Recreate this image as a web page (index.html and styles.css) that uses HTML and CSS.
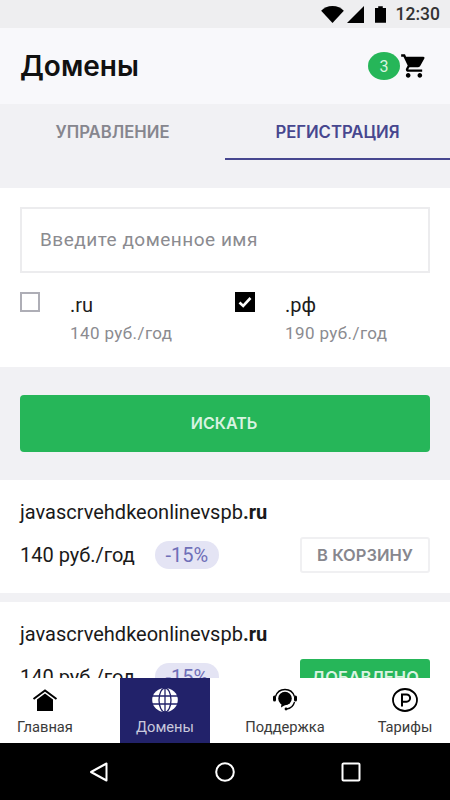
FILE: index.html
```html
<!DOCTYPE html>
<html lang="ru">
<head>
<meta charset="utf-8">
<title>Домены</title>
<link rel="stylesheet" href="styles.css">
</head>
<body>
<div class="app">
  <div class="status">
    <svg class="st-wifi" viewBox="0 0 24 18" width="23" height="17"><path d="M0 5C3 2 7 0 12 0s9 2 12 5L12 18z" fill="#000"/></svg>
    <svg class="st-signal" viewBox="0 0 18 18" width="17" height="17"><path d="M0 18L18 0v18z" fill="#000"/></svg>
    <svg class="st-batt" viewBox="0 0 12 18" width="11" height="17"><path d="M3.500 0h5v2H12v16H0V2h3.500z" fill="#000"/></svg>
    <span class="st-time">12:30</span>
  </div>
  <header class="head">
    <h1 class="title">Домены</h1>
    <div class="cart">
      <span class="badge">3</span>
      <svg class="cart-icon" viewBox="0 0 24 24" width="28" height="28"><path d="M7 18c-1.100 0-1.990.9-1.990 2S5.900 22 7 22s2-.9 2-2-.9-2-2-2zM1 2v2h2l3.600 7.590-1.350 2.450c-.16.28-.25.61-.25.96 0 1.100.9 2 2 2h12v-2H7.420c-.14 0-.25-.11-.25-.25l.03-.12.9-1.630h7.450c.75 0 1.410-.41 1.750-1.030l3.580-6.490A1 1 0 0 0 20 4H5.210l-.94-2H1zm16 16c-1.100 0-1.990.9-1.990 2s.89 2 1.990 2 2-.9 2-2-.9-2-2-2z" fill="#000"/></svg>
    </div>
  </header>
  <nav class="tabs">
    <div class="tab">УПРАВЛЕНИЕ</div>
    <div class="tab tab-active">РЕГИСТРАЦИЯ</div>
  </nav>
  <main class="main">
    <section class="search">
      <div class="field">Введите доменное имя</div>
      <div class="zones">
        <div class="zone">
          <span class="check"></span>
          <div class="zone-text">
            <div class="zone-name">.ru</div>
            <div class="zone-price">140 руб./год</div>
          </div>
        </div>
        <div class="zone">
          <span class="check check-on"><svg viewBox="0 0 20 20" width="20" height="20"><path d="M4.500 10.500l3.700 3.500 7.300-8" fill="none" stroke="#fff" stroke-width="2.600"/></svg></span>
          <div class="zone-text">
            <div class="zone-name">.рф</div>
            <div class="zone-price">190 руб./год</div>
          </div>
        </div>
      </div>
    </section>
    <div class="action"><div class="search-btn">ИСКАТЬ</div></div>
    <article class="card">
      <div class="domain">javascrvehdkeonlinevspb<b>.ru</b></div>
      <div class="row">
        <span class="price">140 руб./год</span>
        <span class="off">-15%</span>
        <span class="buy">В КОРЗИНУ</span>
      </div>
    </article>
    <article class="card">
      <div class="domain">javascrvehdkeonlinevspb<b>.ru</b></div>
      <div class="row">
        <span class="price">140 руб./год</span>
        <span class="off">-15%</span>
        <span class="buy buy-added">ДОБАВЛЕНО</span>
      </div>
    </article>
  </main>
  <footer class="bottom">
    <div class="item item-home">
      <svg viewBox="0 0 26 24" width="26" height="24"><path d="M1.500 11L13 2.500 24.500 11" fill="none" stroke="#000" stroke-width="2"/><path d="M5 11.500L13 5.500l8 6V23H5z" fill="#000"/></svg>
      <span>Главная</span>
    </div>
    <div class="item item-active">
      <svg viewBox="0 0 26 24" width="26" height="24"><ellipse cx="13" cy="12" rx="12.800" ry="12" fill="#fff"/><g fill="none" stroke="#22226a" stroke-width="1.300"><path d="M0 8h26M0 16h26M13 0v24"/><ellipse cx="13" cy="12" rx="6" ry="12"/></g></svg>
      <span>Домены</span>
    </div>
    <div class="item item-support">
      <svg viewBox="0 0 26 24" width="26" height="24"><circle cx="13" cy="10.500" r="6.800" fill="#000"/><path d="M9.500 15.500l-.5 4 5-3z" fill="#000"/><path d="M3.500 8.500C5 4 8.500 1.500 13 1.500s8 2.500 9.500 7M22.500 14c-1 4-4 6.500-8 7" fill="none" stroke="#000" stroke-width="1.300"/><rect x="1" y="7.500" width="3" height="6" rx="1.500" fill="#000"/><rect x="22" y="7.500" width="3" height="6" rx="1.500" fill="#000"/><circle cx="14" cy="21" r="1.400" fill="#000"/></svg>
      <span>Поддержка</span>
    </div>
    <div class="item item-tariff">
      <svg viewBox="0 0 26 24" width="26" height="24"><ellipse cx="13" cy="12" rx="12" ry="11" fill="none" stroke="#000" stroke-width="1.800"/><path d="M10 18.500V6.500h4.500a3.600 3.600 0 0 1 0 7.200H10" fill="none" stroke="#000" stroke-width="2"/></svg>
      <span>Тарифы</span>
    </div>
  </footer>
  <div class="sysnav">
    <svg viewBox="0 0 22 22" width="22" height="22"><path d="M18.500 2.500v17L3 11z" fill="none" stroke="#fff" stroke-width="2" stroke-linejoin="round"/></svg>
    <svg viewBox="0 0 22 22" width="22" height="22"><circle cx="11" cy="11" r="8.800" fill="none" stroke="#fff" stroke-width="2"/></svg>
    <svg viewBox="0 0 22 22" width="22" height="22"><rect x="2.500" y="2.500" width="17" height="17" rx="1" fill="none" stroke="#fff" stroke-width="2"/></svg>
  </div>
</div>
</body>
</html>
```

FILE: styles.css
```css
* { box-sizing: border-box; }
html, body { margin: 0; padding: 0; }
body { font-family: Roboto, "Noto Sans", sans-serif; background: #f1f1f4; color: #111; }
.app { width: 450px; height: 800px; display: flex; flex-direction: column; overflow: hidden; }

.status { flex: 0 0 28px; background: #eeeef0; display: flex; align-items: center; justify-content: flex-end; padding-right: 10px; }
.st-wifi { margin-right: 3px; }
.st-signal { margin-right: 11px; }
.st-batt { margin-right: 10px; }
.st-time { font-size: 17.500px; font-weight: 500; color: #333; }

.head { flex: 0 0 76px; background: #f8f8fb; display: flex; align-items: center; justify-content: space-between; padding: 0 20px; }
.title { margin: 0; font-family: Inter, Roboto, sans-serif; font-size: 28px; font-weight: 600; color: #111; }
.cart { display: flex; align-items: center; margin-right: 2px; }
.badge { width: 32px; height: 28px; border-radius: 50%; background: #26b659; color: #d8f5e0; font-size: 16px; display: flex; align-items: center; justify-content: center; }
.cart-icon { margin-left: 0; }

.tabs { flex: 0 0 56px; background: #f1f1f4; display: flex; }
.tab { flex: 1; display: flex; align-items: center; justify-content: center; padding-top: 1px; font-family: Inter, Roboto, sans-serif; font-size: 16.700px; font-weight: 600; color: #86868e; border-bottom: 2px solid transparent; }
.tab-active { color: #47478f; border-bottom-color: #47478f; }

.main { flex: 1; min-height: 0; overflow: hidden; padding-top: 28px; background: #f1f1f4; }
.search { height: 179px; background: #fff; padding: 19px 20px 0; }
.field { height: 66px; border: 2px solid #ececee; display: flex; align-items: center; padding: 0 0 2px 18px; font-size: 19px; color: #8b8b90; letter-spacing: .5px; }
.zones { display: flex; margin-top: 19px; }
.zone { flex: 0 0 215px; display: flex; }
.check { flex: 0 0 20px; width: 20px; height: 20px; border: 2px solid #aeaeb6; display: block; }
.check-on { background: #000; border: 0; }
.check-on svg { display: block; }
.zone-text { margin-left: 30px; padding-top: 1px; }
.zone-name { font-size: 20px; line-height: 24px; color: #1c1c1c; }
.zone-price { margin-top: 6px; font-size: 17px; line-height: 20px; color: #8b8b90; letter-spacing: .4px; }

.action { height: 113px; padding-top: 28px; }
.search-btn { height: 57px; background: #26b659; border-radius: 4px; color: #d9f3e1; font-size: 16px; font-weight: 600; font-family: Inter, Roboto, sans-serif; display: flex; align-items: center; justify-content: center; margin: 0 20px; padding: 0 2px 2px 0; }

.card { height: 113px; background: #fff; margin-bottom: 9px; padding: 20px 20px 0; }
.domain { font-size: 20px; line-height: 24px; color: #1a1a1a; }
.domain b { font-weight: 700; }
.row { display: flex; align-items: center; margin-top: 13px; height: 36px; }
.price { font-size: 20px; color: #1a1a1a; }
.off { margin-left: 20px; width: 64px; height: 28px; border-radius: 14px; background: #e4e4f4; color: #6f6fb8; font-size: 20px; display: flex; align-items: center; justify-content: center; }
.buy { margin-left: auto; width: 130px; height: 36px; border: 2px solid #f0f0f2; border-radius: 3px; color: #87878e; font-family: Inter, Roboto, sans-serif; font-size: 16.500px; font-weight: 600; display: flex; align-items: center; justify-content: center; }
.buy-added { background: #26b659; border-color: #26b659; color: #d9f3e1; }

.bottom { flex: 0 0 65px; background: #fff; display: flex; }
.item { display: flex; flex-direction: column; align-items: center; justify-content: flex-end; padding-bottom: 7px; font-size: 14.700px; color: #3a3a3a; }
.item svg { margin-bottom: 6px; }
.item-home { flex: 0 0 120px; padding-right: 30px; }
.item-active { flex: 0 0 90px; background: #22226a; color: #c9c9dd; }
.item-support { flex: 0 0 150px; }
.item-tariff { flex: 1; }
.sysnav { flex: 0 0 57px; background: #000; display: flex; align-items: center; justify-content: center; gap: 104px; }
```
